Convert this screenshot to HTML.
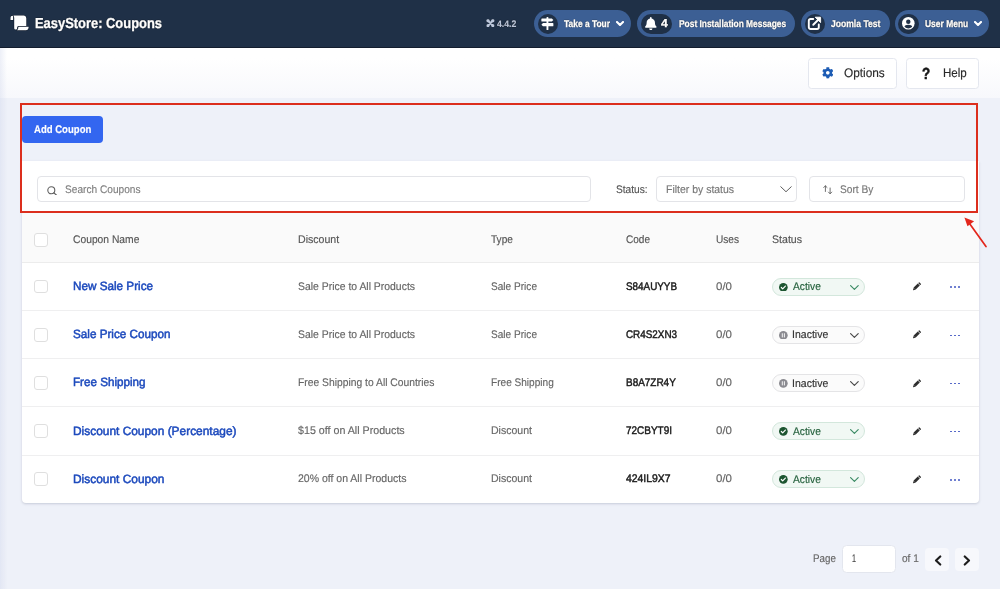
<!DOCTYPE html>
<html><head><meta charset="utf-8">
<style>
*{box-sizing:border-box;margin:0;padding:0}
html,body{width:1000px;height:589px;overflow:hidden}
body{font-family:"Liberation Sans",sans-serif;background:#eef1f9;position:relative}
.abs{position:absolute}
.x{position:absolute;white-space:nowrap;line-height:1;transform-origin:0 0;display:inline-block;-webkit-text-stroke:.15px currentColor}
#hdr{left:0;top:0;width:1000px;height:47.5px;background:#1f3047;border-bottom:1.5px solid #131d2e}
.pill{top:10.2px;height:27.2px;border-radius:13.6px;background:#3c5f94}
.circ{top:13.6px;height:20.2px;border-radius:10.1px;background:#1f3047}
#sub{left:0;top:47.5px;width:1000px;height:50.5px;background:linear-gradient(#ffffff 20%,#f7f8fc)}
#lsh{left:0;top:47.5px;width:7px;height:542px;background:linear-gradient(90deg,rgba(205,212,234,.36),rgba(225,230,244,0))}
.tbtn{background:#fff;border:1px solid #e4e7ef;border-radius:3.5px;height:30.4px;top:58.2px}
#addc{left:22.2px;top:116.1px;width:80.9px;height:26.5px;border-radius:4px;background:#3366f0}
#card{left:22px;top:160.8px;width:957px;height:342.4px;background:#fff;border-radius:0 0 4px 4px;box-shadow:0 1px 2.5px rgba(60,70,100,.22)}
.inp{border:1px solid #e3e4e8;border-radius:4px;background:#fff;height:26.6px;top:175.8px}
#red{left:20px;top:103px;width:958.4px;height:109.7px;border:2.2px solid #dc2e1d}
#thead{left:22px;top:212.7px;width:957px;height:50.3px;background:#fafafa;border-bottom:1px solid #ececec}
.sep{left:22px;width:957px;height:1px;background:#efeff0}
.cb{width:13.6px;height:13.8px;border:1px solid #dfdfdf;border-radius:3px;background:#fff;left:34px}
.st{left:772.1px;width:93.1px;height:18.3px;border-radius:9.2px;border:1px solid #e4e4e6;background:#fbfbfb}
.st.a{border-color:#d3e7dc;background:#f1f8f4}
.dot{width:1.7px;height:1.7px;border-radius:1px;background:#4056c2}
.pbtn{top:547.7px;width:23.6px;height:23.2px;border-radius:4px;background:#f7f8fc}
#w{position:absolute;left:0;top:0;width:1000px;height:589px;will-change:transform;text-rendering:geometricPrecision}
</style></head><body><div id="w">
<div id="hdr" class="abs"></div>
<!-- scroll icon -->
<svg class="abs" style="left:9.5px;top:15px" width="19" height="16" viewBox="0 0 19 16">
<g fill="#fff" stroke="#0c1422" stroke-width=".9" paint-order="stroke">
<path d="M0.500 3c0-1.300.9-2.200 1.900-2.200c.5 0 .8.300.8.800v3.300H.5z"/>
<path d="M4.300 .5h9.300c1.500 0 2.700 1.200 2.700 2.700v7.900H8.700c-.9 0-1.500.6-1.500 1.500v.4c0 .9-.7 1.600-1.500 1.600s-1.500-.7-1.500-1.600V2.900c0-1-.4-1.800-1.200-2.200z"/>
<path d="M8.300 11.800h10.300v.8c0 1.500-1.200 2.700-2.600 2.700H6.800c.9-.5 1.500-1.400 1.500-2.500z"/>
</g></svg>
<!-- joomla mini logo -->
<svg class="abs" style="left:486px;top:18.800px;filter:drop-shadow(0 0 .6px rgba(0,0,0,.8))" width="8.800" height="8.400" viewBox="0 0 18 18"><g stroke="#bcc7dc" stroke-width="4.600" stroke-linecap="round" fill="none"><path d="M4 4l10 10M14 4L4 14"/></g><g fill="#bcc7dc"><rect x=".6" y=".6" width="6.400" height="6.400" rx="2.200"/><rect x="11" y=".6" width="6.400" height="6.400" rx="2.200"/><rect x=".6" y="11" width="6.400" height="6.400" rx="2.200"/><rect x="11" y="11" width="6.400" height="6.400" rx="2.200"/></g></svg>

<div class="abs pill" style="left:533.8px;width:97.4px"></div>
<div class="abs circ" style="left:537.7px;width:20.3px"></div>
<!-- signs post -->
<svg class="abs" style="left:541.4px;top:16.5px" width="12.800" height="13.200" viewBox="0 0 128 132"><g fill="#fff"><rect x="55" y="0" width="19" height="132" rx="7"/><path d="M10 14h98l16 16-16 16H10a6 6 0 0 1-6-6V20a6 6 0 0 1 6-6z"/><path d="M118 61H20L4 77l16 16h98a6 6 0 0 0 6-6V67a6 6 0 0 0-6-6z"/></g></svg>
<svg class="abs" style="left:616.4px;top:21.2px" width="8" height="5" viewBox="0 0 16 10"><path d="M2 2l6 6 6-6" stroke="#fff" stroke-width="4.200" fill="none" stroke-linecap="round" stroke-linejoin="round"/></svg>

<div class="abs pill" style="left:637.1px;width:158.2px"></div>
<div class="abs circ" style="left:640.5px;width:31.2px"></div>
<svg class="abs" style="left:645px;top:17px" width="11.600" height="13.300" viewBox="0 0 448 512"><path fill="#fff" d="M224 512c35.320 0 63.970-28.650 63.970-64H160.030c0 35.350 28.650 64 63.970 64zm215.390-149.710c-19.320-20.760-55.470-51.990-55.470-154.290 0-77.700-54.480-139.900-127.940-155.160V32c0-17.670-14.320-32-31.980-32s-31.980 14.330-31.980 32v20.840C118.560 68.100 64.080 130.300 64.080 208c0 102.300-36.150 133.530-55.470 154.290-6 6.450-8.660 14.160-8.610 21.710.11 16.400 12.980 32 32.100 32h383.800c19.120 0 32-15.600 32.100-32 .05-7.550-2.610-15.270-8.610-21.710z"/></svg>

<div class="abs pill" style="left:801px;width:89.4px"></div>
<div class="abs circ" style="left:804.9px;width:20.3px"></div>
<!-- external link -->
<svg class="abs" style="left:807.3px;top:16px" width="14.800" height="14.400" viewBox="0 0 29.600 28.800"><g stroke="#fff" fill="none" stroke-width="3.800" stroke-linecap="round" stroke-linejoin="round"><path d="M12.500 6H7a3.400 3.400 0 0 0-3.400 3.400V22.600a3.400 3.400 0 0 0 3.400 3.400H20.200a3.400 3.400 0 0 0 3.400-3.400V17"/><path d="M12.500 17.500L25 5"/></g><path d="M16.400 2.400H27.200V13.200z" fill="#fff" stroke="#fff" stroke-width="1.800" stroke-linejoin="round"/></svg>

<div class="abs pill" style="left:895px;width:94.2px"></div>
<div class="abs circ" style="left:898.3px;width:20.600px"></div>
<!-- user circle -->
<svg class="abs" style="left:902.4px;top:17.2px" width="12.600" height="12.600" viewBox="0 0 26 26"><defs><clipPath id="uc"><circle cx="13" cy="13" r="10.500"/></clipPath></defs><circle cx="13" cy="13" r="13" fill="#fff"/><circle cx="13" cy="10" r="4.600" fill="#1f3047"/><ellipse cx="13" cy="23" rx="8.600" ry="6.800" fill="#1f3047" clip-path="url(#uc)"/></svg>
<svg class="abs" style="left:974px;top:21.2px" width="8" height="5" viewBox="0 0 16 10"><path d="M2 2l6 6 6-6" stroke="#fff" stroke-width="4.200" fill="none" stroke-linecap="round" stroke-linejoin="round"/></svg>

<div id="sub" class="abs"></div>
<div id="lsh" class="abs"></div>
<div class="abs tbtn" style="left:807.7px;width:89.8px"></div>
<div class="abs tbtn" style="left:906.3px;width:72.8px"></div>
<!-- gear -->
<svg class="abs" style="left:821.5px;top:67.300px" width="11.600" height="11.600" viewBox="0 0 512 512"><path fill="#1d5cb4" d="M487.4 315.7l-42.600-24.600c4.300-23.200 4.300-47 0-70.200l42.600-24.600c4.900-2.800 7.100-8.600 5.500-14-11.100-35.600-30-67.800-54.700-94.600-3.800-4.100-10-5.100-14.800-2.300L380.800 110c-17.900-15.400-38.500-27.300-60.800-35.100V25.800c0-5.600-3.900-10.500-9.400-11.700-36.700-8.200-74.300-7.800-109.200 0-5.500 1.200-9.400 6.100-9.400 11.700V75c-22.200 7.900-42.800 19.800-60.800 35.100L88.700 85.500c-4.900-2.800-11-1.900-14.800 2.300-24.700 26.700-43.600 58.900-54.700 94.600-1.700 5.400.6 11.200 5.500 14L67.300 221c-4.300 23.200-4.300 47 0 70.200l-42.600 24.600c-4.900 2.800-7.100 8.600-5.500 14 11.100 35.600 30 67.800 54.700 94.600 3.800 4.100 10 5.100 14.800 2.300l42.600-24.600c17.900 15.400 38.500 27.300 60.800 35.100v49.200c0 5.600 3.900 10.500 9.400 11.700 36.700 8.200 74.300 7.800 109.200 0 5.500-1.200 9.400-6.100 9.400-11.700v-49.200c22.200-7.900 42.800-19.800 60.800-35.100l42.600 24.600c4.900 2.800 11 1.900 14.800-2.300 24.700-26.700 43.600-58.900 54.700-94.600 1.500-5.500-.7-11.300-5.600-14.100zM256 336c-44.100 0-80-35.900-80-80s35.900-80 80-80 80 35.900 80 80-35.900 80-80 80z"/></svg>

<div id="addc" class="abs"></div>
<div id="card" class="abs"></div>
<div class="abs inp" style="left:37.2px;width:553.8px"></div>
<svg class="abs" style="left:47.2px;top:185.7px" width="10.4" height="9.800" viewBox="0 0 20.800 19.600"><circle cx="8.600" cy="8.600" r="7" stroke="#5f5f5f" stroke-width="2.200" fill="none"/><path d="M13.800 13.800l5.400 4.600" stroke="#5f5f5f" stroke-width="2.400" stroke-linecap="round"/></svg>
<div class="abs inp" style="left:656.3px;width:141px"></div>
<svg class="abs" style="left:779.5px;top:186.400px" width="12" height="6.600" viewBox="0 0 24 13.200"><path d="M1.500 1.500l10.500 10 10.500-10" stroke="#555" stroke-width="1.900" fill="none" stroke-linecap="round" stroke-linejoin="round"/></svg>
<div class="abs inp" style="left:809px;width:155.500px"></div>
<svg class="abs" style="left:823.4px;top:184.800px" width="10" height="9.600" viewBox="0 0 20 19.200"><g stroke="#555" stroke-width="1.700" fill="none" stroke-linecap="round" stroke-linejoin="round"><path d="M4.800 13V1.800M1.500 5l3.300-3.300L8.100 5"/><path d="M14.200 6v11.400M10.900 14.200l3.300 3.300 3.300-3.300"/></g></svg>
<div id="thead" class="abs"></div>
<div class="abs cb" style="top:233px"></div>
<div class="abs cb" style="top:279.7px"></div>
<div class="abs st a" style="top:277.5px"></div>
<svg class="abs" style="left:779.1px;top:282.7px" width="8.700" height="8.700" viewBox="0 0 16 16"><circle cx="8" cy="8" r="8" fill="#1c5530"/><path d="M4.300 8.300l2.500 2.500 4.900-5.200" stroke="#fff" stroke-width="2.200" fill="none" stroke-linecap="round" stroke-linejoin="round"/></svg>
<svg class="abs" style="left:849.8px;top:284.8px" width="8.800" height="5" viewBox="0 0 17.600 10"><path d="M1.200 1.200l7.600 7.400 7.600-7.400" stroke="#3a8a63" stroke-width="2.300" fill="none" stroke-linecap="round" stroke-linejoin="round"/></svg>
<svg class="abs" style="left:912.4px;top:282.3px" width="9.300" height="9.300" viewBox="0 0 96 96"><g transform="translate(48,48) rotate(45) translate(-15,-52)" fill="#2e2e2e"><rect x="0" y="0" width="30" height="15" rx="6"/><rect x="0" y="21" width="30" height="59"/><path d="M0 79h30L17.500 103a3 3 0 0 1-5 0z"/></g></svg>
<div class="abs dot" style="left:950.40px;top:286.4px"></div>
<div class="abs dot" style="left:954.35px;top:286.4px"></div>
<div class="abs dot" style="left:958.30px;top:286.4px"></div>
<div class="abs sep" style="top:310.1px"></div>
<div class="abs cb" style="top:327.8px"></div>
<div class="abs st" style="top:325.6px"></div>
<svg class="abs" style="left:779.1px;top:330.8px" width="8.700" height="8.700" viewBox="0 0 16 16"><circle cx="8" cy="8" r="8" fill="#8b8b91"/><path d="M6.100 4.900v6.200M9.900 4.900v6.200" stroke="#fff" stroke-width="1.700" fill="none" stroke-linecap="round"/></svg>
<svg class="abs" style="left:849.8px;top:332.9px" width="8.800" height="5" viewBox="0 0 17.600 10"><path d="M1.200 1.200l7.600 7.400 7.600-7.400" stroke="#484848" stroke-width="2.300" fill="none" stroke-linecap="round" stroke-linejoin="round"/></svg>
<svg class="abs" style="left:912.4px;top:330.4px" width="9.300" height="9.300" viewBox="0 0 96 96"><g transform="translate(48,48) rotate(45) translate(-15,-52)" fill="#2e2e2e"><rect x="0" y="0" width="30" height="15" rx="6"/><rect x="0" y="21" width="30" height="59"/><path d="M0 79h30L17.500 103a3 3 0 0 1-5 0z"/></g></svg>
<div class="abs dot" style="left:950.40px;top:334.5px"></div>
<div class="abs dot" style="left:954.35px;top:334.5px"></div>
<div class="abs dot" style="left:958.30px;top:334.5px"></div>
<div class="abs sep" style="top:358.3px"></div>
<div class="abs cb" style="top:375.9px"></div>
<div class="abs st" style="top:373.7px"></div>
<svg class="abs" style="left:779.1px;top:378.9px" width="8.700" height="8.700" viewBox="0 0 16 16"><circle cx="8" cy="8" r="8" fill="#8b8b91"/><path d="M6.100 4.900v6.200M9.900 4.900v6.200" stroke="#fff" stroke-width="1.700" fill="none" stroke-linecap="round"/></svg>
<svg class="abs" style="left:849.8px;top:381.0px" width="8.800" height="5" viewBox="0 0 17.600 10"><path d="M1.200 1.200l7.600 7.400 7.600-7.400" stroke="#484848" stroke-width="2.300" fill="none" stroke-linecap="round" stroke-linejoin="round"/></svg>
<svg class="abs" style="left:912.4px;top:378.6px" width="9.300" height="9.300" viewBox="0 0 96 96"><g transform="translate(48,48) rotate(45) translate(-15,-52)" fill="#2e2e2e"><rect x="0" y="0" width="30" height="15" rx="6"/><rect x="0" y="21" width="30" height="59"/><path d="M0 79h30L17.500 103a3 3 0 0 1-5 0z"/></g></svg>
<div class="abs dot" style="left:950.40px;top:382.6px"></div>
<div class="abs dot" style="left:954.35px;top:382.6px"></div>
<div class="abs dot" style="left:958.30px;top:382.6px"></div>
<div class="abs sep" style="top:406.4px"></div>
<div class="abs cb" style="top:424.1px"></div>
<div class="abs st a" style="top:421.9px"></div>
<svg class="abs" style="left:779.1px;top:427.1px" width="8.700" height="8.700" viewBox="0 0 16 16"><circle cx="8" cy="8" r="8" fill="#1c5530"/><path d="M4.300 8.300l2.500 2.500 4.900-5.200" stroke="#fff" stroke-width="2.200" fill="none" stroke-linecap="round" stroke-linejoin="round"/></svg>
<svg class="abs" style="left:849.8px;top:429.2px" width="8.800" height="5" viewBox="0 0 17.600 10"><path d="M1.200 1.200l7.600 7.400 7.600-7.400" stroke="#3a8a63" stroke-width="2.300" fill="none" stroke-linecap="round" stroke-linejoin="round"/></svg>
<svg class="abs" style="left:912.4px;top:426.7px" width="9.300" height="9.300" viewBox="0 0 96 96"><g transform="translate(48,48) rotate(45) translate(-15,-52)" fill="#2e2e2e"><rect x="0" y="0" width="30" height="15" rx="6"/><rect x="0" y="21" width="30" height="59"/><path d="M0 79h30L17.500 103a3 3 0 0 1-5 0z"/></g></svg>
<div class="abs dot" style="left:950.40px;top:430.8px"></div>
<div class="abs dot" style="left:954.35px;top:430.8px"></div>
<div class="abs dot" style="left:958.30px;top:430.8px"></div>
<div class="abs sep" style="top:454.5px"></div>
<div class="abs cb" style="top:472.2px"></div>
<div class="abs st a" style="top:470.0px"></div>
<svg class="abs" style="left:779.1px;top:475.2px" width="8.700" height="8.700" viewBox="0 0 16 16"><circle cx="8" cy="8" r="8" fill="#1c5530"/><path d="M4.300 8.300l2.500 2.500 4.900-5.200" stroke="#fff" stroke-width="2.200" fill="none" stroke-linecap="round" stroke-linejoin="round"/></svg>
<svg class="abs" style="left:849.8px;top:477.3px" width="8.800" height="5" viewBox="0 0 17.600 10"><path d="M1.200 1.200l7.600 7.400 7.600-7.400" stroke="#3a8a63" stroke-width="2.300" fill="none" stroke-linecap="round" stroke-linejoin="round"/></svg>
<svg class="abs" style="left:912.4px;top:474.8px" width="9.300" height="9.300" viewBox="0 0 96 96"><g transform="translate(48,48) rotate(45) translate(-15,-52)" fill="#2e2e2e"><rect x="0" y="0" width="30" height="15" rx="6"/><rect x="0" y="21" width="30" height="59"/><path d="M0 79h30L17.500 103a3 3 0 0 1-5 0z"/></g></svg>
<div class="abs dot" style="left:950.40px;top:478.9px"></div>
<div class="abs dot" style="left:954.35px;top:478.9px"></div>
<div class="abs dot" style="left:958.30px;top:478.9px"></div>
<div id="red" class="abs"></div>
<!-- arrow -->
<svg class="abs" style="left:960px;top:214px" width="30" height="36" viewBox="0 0 30 36"><path d="M26 32.600L8.600 8.200" stroke="#e3261c" stroke-width="1.700" stroke-linecap="round"/><path d="M4.400 3.400l9.700 3.800-6.600 5z" fill="#e3261c"/></svg>
<!-- pagination -->
<div class="abs" style="left:842px;top:545.2px;width:53.600px;height:27.800px;border:1px solid #e3e6ee;border-radius:4.500px;background:#fff"></div>
<div class="abs pbtn" style="left:925.4px"></div>
<div class="abs pbtn" style="left:955.4px"></div>
<svg class="abs" style="left:933.5px;top:554.5px" width="8" height="11" viewBox="0 0 16 22"><path d="M12.500 3L4 11l8.500 8" stroke="#1d1d1d" stroke-width="4.300" fill="none" stroke-linecap="round" stroke-linejoin="round"/></svg>
<svg class="abs" style="left:963.2px;top:554.5px" width="8" height="11" viewBox="0 0 16 22"><path d="M3.500 3L12 11l-8.500 8" stroke="#1d1d1d" stroke-width="4.300" fill="none" stroke-linecap="round" stroke-linejoin="round"/></svg>
<span class="x" style="left:35.3px;top:17px;font-size:14.5px;font-weight:bold;color:#fff;transform:scaleX(0.8905);text-shadow:0 0 1.2px rgba(0,0,0,.9),0 0 1px rgba(0,0,0,.6);-webkit-text-stroke:.3px currentColor;">EasyStore: Coupons</span>
<span class="x" style="left:496.7px;top:20px;font-size:9.5px;font-weight:bold;color:#bcc6da;transform:scaleX(0.9177);text-shadow:0 0 1.2px rgba(0,0,0,.9),0 0 1px rgba(0,0,0,.6);-webkit-text-stroke:.15px currentColor;">4.4.2</span>
<span class="x" style="left:564.4px;top:20px;font-size:10px;font-weight:bold;color:#fff;transform:scaleX(0.8416);text-shadow:0 0 1.2px rgba(0,0,0,.9),0 0 1px rgba(0,0,0,.6);-webkit-text-stroke:.3px currentColor;">Take a Tour</span>
<span class="x" style="left:660.7px;top:19px;font-size:11.5px;font-weight:bold;color:#fff;transform:scaleX(1.0615);text-shadow:0 0 1.2px rgba(0,0,0,.9),0 0 1px rgba(0,0,0,.6);-webkit-text-stroke:.3px currentColor;">4</span>
<span class="x" style="left:678.8px;top:20px;font-size:10px;font-weight:bold;color:#fff;transform:scaleX(0.8386);text-shadow:0 0 1.2px rgba(0,0,0,.9),0 0 1px rgba(0,0,0,.6);-webkit-text-stroke:.3px currentColor;">Post Installation Messages</span>
<span class="x" style="left:831.4px;top:20px;font-size:10px;font-weight:bold;color:#fff;transform:scaleX(0.8575);text-shadow:0 0 1.2px rgba(0,0,0,.9),0 0 1px rgba(0,0,0,.6);-webkit-text-stroke:.3px currentColor;">Joomla Test</span>
<span class="x" style="left:925.0px;top:20px;font-size:10px;font-weight:bold;color:#fff;transform:scaleX(0.8450);text-shadow:0 0 1.2px rgba(0,0,0,.9),0 0 1px rgba(0,0,0,.6);-webkit-text-stroke:.3px currentColor;">User Menu</span>
<span class="x" style="left:843.8px;top:67px;font-size:12.5px;font-weight:normal;color:#2a2a2a;transform:scaleX(0.9468);">Options</span>
<span class="x" style="left:922.3px;top:67px;font-size:16px;font-weight:bold;color:#151515;transform:scaleX(0.8383);-webkit-text-stroke:.5px #151515;">?</span>
<span class="x" style="left:943.0px;top:67px;font-size:12.5px;font-weight:normal;color:#2a2a2a;transform:scaleX(0.9254);">Help</span>
<span class="x" style="left:34.0px;top:125px;font-size:11px;font-weight:bold;color:#fff;transform:scaleX(0.8684);">Add Coupon</span>
<span class="x" style="left:64.5px;top:185px;font-size:11px;font-weight:normal;color:#808080;transform:scaleX(0.9213);">Search Coupons</span>
<span class="x" style="left:615.5px;top:185px;font-size:11px;font-weight:normal;color:#555;transform:scaleX(0.9255);">Status:</span>
<span class="x" style="left:665.9px;top:185px;font-size:11px;font-weight:normal;color:#777;transform:scaleX(0.9520);">Filter by status</span>
<span class="x" style="left:839.6px;top:185px;font-size:11px;font-weight:normal;color:#777;transform:scaleX(0.9258);">Sort By</span>
<span class="x" style="left:73.0px;top:235px;font-size:11px;font-weight:normal;color:#555;transform:scaleX(0.9360);">Coupon Name</span>
<span class="x" style="left:298.2px;top:235px;font-size:11px;font-weight:normal;color:#555;transform:scaleX(0.9627);">Discount</span>
<span class="x" style="left:491.4px;top:235px;font-size:11px;font-weight:normal;color:#555;transform:scaleX(0.9179);">Type</span>
<span class="x" style="left:625.8px;top:235px;font-size:11px;font-weight:normal;color:#555;transform:scaleX(0.9127);">Code</span>
<span class="x" style="left:716.2px;top:235px;font-size:11px;font-weight:normal;color:#555;transform:scaleX(0.9177);">Uses</span>
<span class="x" style="left:772.2px;top:235px;font-size:11px;font-weight:normal;color:#555;transform:scaleX(0.9619);">Status</span>
<span class="x" style="left:73.0px;top:280px;font-size:12px;font-weight:normal;color:#1d4abd;transform:scaleX(0.9752);-webkit-text-stroke:.5px #1d4abd;">New Sale Price</span>
<span class="x" style="left:298.2px;top:282px;font-size:11px;font-weight:normal;color:#666;transform:scaleX(0.9472);">Sale Price to All Products</span>
<span class="x" style="left:491.2px;top:282px;font-size:11px;font-weight:normal;color:#666;transform:scaleX(0.9174);">Sale Price</span>
<span class="x" style="left:625.8px;top:282px;font-size:11px;font-weight:normal;color:#1a1a1a;transform:scaleX(0.8967);-webkit-text-stroke:.45px #1a1a1a;">S84AUYYB</span>
<span class="x" style="left:716.2px;top:282px;font-size:11px;font-weight:normal;color:#666;transform:scaleX(1.0460);">0/0</span>
<span class="x" style="left:792.6px;top:282px;font-size:11px;font-weight:normal;color:#24603c;transform:scaleX(0.9310);">Active</span>
<span class="x" style="left:73.0px;top:328px;font-size:12px;font-weight:normal;color:#1d4abd;transform:scaleX(0.9744);-webkit-text-stroke:.5px #1d4abd;">Sale Price Coupon</span>
<span class="x" style="left:298.2px;top:330px;font-size:11px;font-weight:normal;color:#666;transform:scaleX(0.9472);">Sale Price to All Products</span>
<span class="x" style="left:491.2px;top:330px;font-size:11px;font-weight:normal;color:#666;transform:scaleX(0.9174);">Sale Price</span>
<span class="x" style="left:625.8px;top:330px;font-size:11px;font-weight:normal;color:#1a1a1a;transform:scaleX(0.8969);-webkit-text-stroke:.45px #1a1a1a;">CR4S2XN3</span>
<span class="x" style="left:716.2px;top:330px;font-size:11px;font-weight:normal;color:#666;transform:scaleX(1.0460);">0/0</span>
<span class="x" style="left:791.9px;top:330px;font-size:11px;font-weight:normal;color:#333;transform:scaleX(0.9572);">Inactive</span>
<span class="x" style="left:73.0px;top:376px;font-size:12px;font-weight:normal;color:#1d4abd;transform:scaleX(0.9703);-webkit-text-stroke:.5px #1d4abd;">Free Shipping</span>
<span class="x" style="left:298.2px;top:378px;font-size:11px;font-weight:normal;color:#666;transform:scaleX(0.9379);">Free Shipping to All Countries</span>
<span class="x" style="left:491.2px;top:378px;font-size:11px;font-weight:normal;color:#666;transform:scaleX(0.9168);">Free Shipping</span>
<span class="x" style="left:625.8px;top:378px;font-size:11px;font-weight:normal;color:#1a1a1a;transform:scaleX(0.9049);-webkit-text-stroke:.45px #1a1a1a;">B8A7ZR4Y</span>
<span class="x" style="left:716.2px;top:378px;font-size:11px;font-weight:normal;color:#666;transform:scaleX(1.0460);">0/0</span>
<span class="x" style="left:791.9px;top:379px;font-size:11px;font-weight:normal;color:#333;transform:scaleX(0.9572);">Inactive</span>
<span class="x" style="left:73.0px;top:425px;font-size:12px;font-weight:normal;color:#1d4abd;transform:scaleX(0.9923);-webkit-text-stroke:.5px #1d4abd;">Discount Coupon (Percentage)</span>
<span class="x" style="left:298.2px;top:426px;font-size:11px;font-weight:normal;color:#666;transform:scaleX(0.9711);">$15 off on All Products</span>
<span class="x" style="left:491.2px;top:426px;font-size:11px;font-weight:normal;color:#666;transform:scaleX(0.9580);">Discount</span>
<span class="x" style="left:625.8px;top:426px;font-size:11px;font-weight:normal;color:#1a1a1a;transform:scaleX(0.9064);-webkit-text-stroke:.45px #1a1a1a;">72CBYT9I</span>
<span class="x" style="left:716.2px;top:426px;font-size:11px;font-weight:normal;color:#666;transform:scaleX(1.0460);">0/0</span>
<span class="x" style="left:792.6px;top:427px;font-size:11px;font-weight:normal;color:#24603c;transform:scaleX(0.9310);">Active</span>
<span class="x" style="left:73.0px;top:473px;font-size:12px;font-weight:normal;color:#1d4abd;transform:scaleX(0.9928);-webkit-text-stroke:.5px #1d4abd;">Discount Coupon</span>
<span class="x" style="left:298.2px;top:474px;font-size:11px;font-weight:normal;color:#666;transform:scaleX(0.9547);">20% off on All Products</span>
<span class="x" style="left:491.2px;top:474px;font-size:11px;font-weight:normal;color:#666;transform:scaleX(0.9580);">Discount</span>
<span class="x" style="left:625.8px;top:474px;font-size:11px;font-weight:normal;color:#1a1a1a;transform:scaleX(0.9467);-webkit-text-stroke:.45px #1a1a1a;">424IL9X7</span>
<span class="x" style="left:716.2px;top:474px;font-size:11px;font-weight:normal;color:#666;transform:scaleX(1.0460);">0/0</span>
<span class="x" style="left:792.6px;top:475px;font-size:11px;font-weight:normal;color:#24603c;transform:scaleX(0.9310);">Active</span>
<span class="x" style="left:812.7px;top:554px;font-size:11px;font-weight:normal;color:#666;transform:scaleX(0.8909);">Page</span>
<span class="x" style="left:852.3px;top:554px;font-size:11px;font-weight:normal;color:#444;transform:scaleX(0.6531);">1</span>
<span class="x" style="left:901.7px;top:554px;font-size:11px;font-weight:normal;color:#666;transform:scaleX(0.9151);">of 1</span>
</div></body></html>
